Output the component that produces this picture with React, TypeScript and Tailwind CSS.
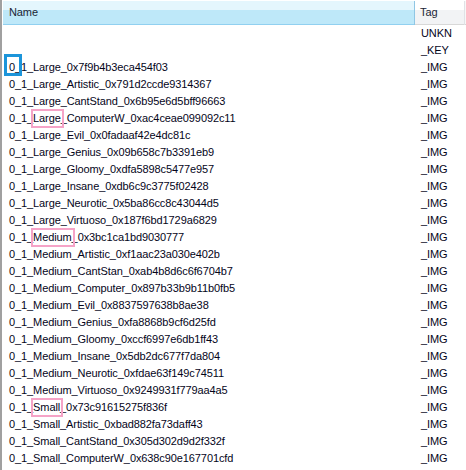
import React from 'react';

type Mark = 'focus' | 'pink' | null;

interface Row {
  name: string;
  tag: string;
  mark?: Mark;
  // part of the name that the mark wraps: [start, end)
  span?: [number, number];
}

const NAMES = [
  '0_1_Large_0x7f9b4b3eca454f03',
  '0_1_Large_Artistic_0x791d2ccde9314367',
  '0_1_Large_CantStand_0x6b95e6d5bff96663',
  '0_1_Large_ComputerW_0xac4ceae099092c11',
  '0_1_Large_Evil_0x0fadaaf42e4dc81c',
  '0_1_Large_Genius_0x09b658c7b3391eb9',
  '0_1_Large_Gloomy_0xdfa5898c5477e957',
  '0_1_Large_Insane_0xdb6c9c3775f02428',
  '0_1_Large_Neurotic_0x5ba86cc8c43044d5',
  '0_1_Large_Virtuoso_0x187f6bd1729a6829',
  '0_1_Medium_0x3bc1ca1bd9030777',
  '0_1_Medium_Artistic_0xf1aac23a030e402b',
  '0_1_Medium_CantStan_0xab4b8d6c6f6704b7',
  '0_1_Medium_Computer_0x897b33b9b11b0fb5',
  '0_1_Medium_Evil_0x8837597638b8ae38',
  '0_1_Medium_Genius_0xfa8868b9cf6d25fd',
  '0_1_Medium_Gloomy_0xccf6997e6db1ff43',
  '0_1_Medium_Insane_0x5db2dc677f7da804',
  '0_1_Medium_Neurotic_0xfdae63f149c74511',
  '0_1_Medium_Virtuoso_0x9249931f779aa4a5',
  '0_1_Small_0x73c91615275f836f',
  '0_1_Small_Artistic_0xbad882fa73daff43',
  '0_1_Small_CantStand_0x305d302d9d2f332f',
  '0_1_Small_ComputerW_0x638c90e167701cfd',
];

const ROWS: Row[] = [
  { name: '', tag: 'UNKN' },
  { name: '', tag: '_KEY' },
  ...NAMES.map((name, i): Row => {
    if (i === 0) return { name, tag: '_IMG', mark: 'focus', span: [0, 2] };
    if (i === 3) return { name, tag: '_IMG', mark: 'pink', span: [4, 9] };
    if (i === 10) return { name, tag: '_IMG', mark: 'pink', span: [4, 10] };
    if (i === 20) return { name, tag: '_IMG', mark: 'pink', span: [4, 9] };
    return { name, tag: '_IMG' };
  }),
];

const NameCell = ({ row }: { row: Row }) => {
  if (!row.mark || !row.span) return <span>{row.name}</span>;
  const [a, b] = row.span;
  return (
    <span>
      {row.name.slice(0, a)}
      <span className="relative inline-block">
        {row.name.slice(a, b)}
        {row.mark === 'focus' ? (
          <span className="absolute -left-[5px] -right-[1px] -top-[5px] bottom-0 border-[3px] border-[#1c95da]" />
        ) : (
          <span className="absolute -left-[2px] -right-[3px] -top-[1px] -bottom-[1px] border-2 border-[#f5a3c7]" />
        )}
      </span>
      {row.name.slice(b)}
    </span>
  );
};

export default function App() {
  return (
    <div
      className="w-[466px] h-[470px] bg-white flex overflow-hidden text-[11px] tracking-[-0.1px] text-[#05051a]"
      style={{ fontFamily: '"Liberation Sans", Arial, sans-serif' }}
    >
      <div className="w-[2px] shrink-0 bg-[#a0a0a0]" />
      <div className="flex-1 flex flex-col">
        {/* column headers */}
        <div className="flex h-[25px] shrink-0 pt-px">
          <div className="w-px bg-white" />
          <div className="w-[411px] flex items-center pl-[6px] pb-px border-b border-[#91d0f0] bg-[linear-gradient(to_bottom,#e4f6fd_0%,#e4f6fd_40%,#bee8f9_41%,#bee8f9_100%)] text-[#1b2535]">
            Name
          </div>
          <div className="w-px bg-[#8fc6e4]" />
          <div className="w-[49px] flex items-center pl-[5px] pb-px border-b border-[#d8d8d8] bg-[linear-gradient(to_bottom,#ffffff_0%,#ffffff_40%,#f2f3f5_41%,#f2f3f5_100%)] text-[#1b2535]">
            Tag
          </div>
          <div className="w-px bg-[#e0e2e6]" />
          <div className="flex-1 border-b border-[#d8d8d8] bg-[#f7f7f7]" />
        </div>

        {/* rows */}
        <div className="flex flex-col">
          {ROWS.map((row, i) => (
            <div key={i} className="flex h-[17px] leading-[17px] whitespace-nowrap">
              <div className="w-[413px] shrink-0 pl-[7px]">
                <NameCell row={row} />
              </div>
              <div className="pl-[6px]">{row.tag}</div>
            </div>
          ))}
        </div>
      </div>
    </div>
  );
}
